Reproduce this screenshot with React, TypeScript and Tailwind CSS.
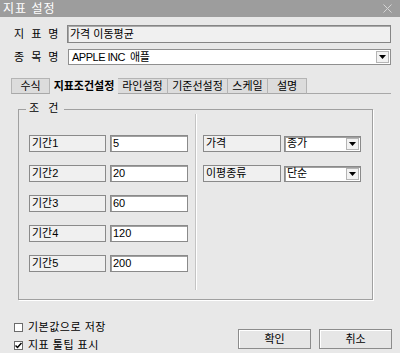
import { useState } from "react";

const tabs = ["수식", "지표조건설정", "라인설정", "기준선설정", "스케일", "설명"];
const tabWidths = ["w-[39px]", "w-[68px]", "w-[50px]", "w-[60px]", "w-[40px]", "w-[39px]"];

const periods = [
    { label: "기간1", value: "5" },
    { label: "기간2", value: "20" },
    { label: "기간3", value: "60" },
    { label: "기간4", value: "120" },
    { label: "기간5", value: "200" },
];

function DropButton() {
    return (
        <div className="flex items-center justify-center bg-[#f2f2f2] border border-[#b5b5b5] w-[13px] h-[12px]">
            <svg width="7" height="4" viewBox="0 0 7 4">
                <path d="M0 0 L7 0 L3.5 4 Z" fill="#000" />
            </svg>
        </div>
    );
}

function Check({ checked }: { checked?: boolean }) {
    return (
        <div className="w-[9px] h-[9px] bg-white border border-[#6b6b6b] flex items-center justify-center">
            {checked && (
                <svg width="7" height="7" viewBox="0 0 7 7">
                    <path d="M0.5 3.5 L2.5 5.5 L6.5 1" stroke="#000" strokeWidth="1.5" fill="none" />
                </svg>
            )}
        </div>
    );
}

export default function App() {
    const [active] = useState(1);

    return (
        <div className="w-[400px] h-[353px] bg-[#e8e8e8] flex flex-col text-[11px] leading-none text-black font-['Liberation_Sans','Noto_Sans_CJK_KR',sans-serif] overflow-hidden whitespace-nowrap">
            {/* Title bar */}
            <div className="h-[17px] bg-[#9d9d9d] flex items-center justify-between pl-[3px] pr-[8px] text-white text-[12px]">
                <span className="tracking-[1px]">지표 설정</span>
                <svg width="9" height="9" viewBox="0 0 9 9">
                    <path d="M0.5 0.5 L8.5 8.5 M8.5 0.5 L0.5 8.5" stroke="#d4d4d4" strokeWidth="1" />
                </svg>
            </div>

            {/* Name row */}
            <div className="mt-[8px] ml-[14px] flex items-center h-[18px]">
                <span className="w-[53px] tracking-[2px]">지 표 명</span>
                <div className="w-[324px] h-[18px] bg-[#f0f0f0] border border-[#858585] shadow-[inset_1px_1px_0_#a8a8a8] flex items-center pl-[2px]">
                    가격 이동평균
                </div>
            </div>

            {/* Symbol row */}
            <div className="mt-[6px] ml-[14px] flex items-center h-[16px]">
                <span className="w-[54px] tracking-[2px]">종 목 명</span>
                <div className="w-[323px] h-[16px] bg-white border border-[#8f8f8f] flex items-center justify-between pl-[3px] pr-[1px]">
                    <span className="tracking-[-0.5px]">APPLE INC &nbsp;애플</span>
                    <DropButton />
                </div>
            </div>

            {/* Tabs */}
            <div className="mt-[13px] ml-[11px] flex h-[16px]">
                {tabs.map((t, i) => (
                    <div
                        key={t}
                        className={`${tabWidths[i]} h-[16px] flex items-center justify-center ${
                            i === active
                                ? "font-bold bg-[#e8e8e8]"
                                : "bg-[#dcdcdc] border-t border-r border-[#b4b4b4] border-b border-b-[#a8a8a8]"
                        } ${i === 0 ? "border-l" : ""}`}
                    >
                        {t}
                    </div>
                ))}
                <div className="w-[84px] border-b border-[#a8a8a8]" />
            </div>

            {/* Group box */}
            <div className="mt-[15px] ml-[18px] w-[355px] h-[191px] border border-[#a0a0a0] shadow-[1px_1px_0_#ffffff] relative flex">
                <span className="absolute -top-[7px] left-[7px] px-[3px] bg-[#e8e8e8] tracking-[3px]">조 건</span>

                {/* Left column */}
                <div className="pt-[25px] pl-[10px] flex flex-col gap-[13px]">
                    {periods.map((p) => (
                        <div key={p.label} className="flex gap-[4px] h-[17px]">
                            <div className="w-[77px] h-[17px] bg-[#f0f0f0] border border-[#8a8a8a] pl-[2px] pt-[2px]">
                                {p.label}
                            </div>
                            <div className="w-[78px] h-[17px] bg-white border border-[#8a8a8a] shadow-[inset_1px_1px_0_#a0a0a0] pl-[2px] pt-[2px]">
                                {p.value}
                            </div>
                        </div>
                    ))}
                </div>

                {/* Divider */}
                <div className="ml-[7px] mt-[4px] mb-[9px] w-[2px] border-l border-[#c4c4c4] border-r border-r-white" />

                {/* Right column */}
                <div className="pt-[25px] pl-[6px] flex flex-col gap-[13px]">
                    {[
                        { label: "가격", value: "종가" },
                        { label: "이평종류", value: "단순" },
                    ].map((r) => (
                        <div key={r.label} className="flex gap-[3px] h-[17px] items-center">
                            <div className="w-[78px] h-[17px] bg-[#f0f0f0] border border-[#8a8a8a] pl-[2px] pt-[2px]">
                                {r.label}
                            </div>
                            <div className="w-[77px] h-[16px] bg-white border border-[#8a8a8a] shadow-[inset_1px_1px_0_#a0a0a0] flex items-center justify-between pl-[2px] pr-[1px]">
                                <span>{r.value}</span>
                                <DropButton />
                            </div>
                        </div>
                    ))}
                </div>
            </div>

            {/* Bottom */}
            <div className="mt-[23px] flex">
                <div className="ml-[14px] flex flex-col gap-[9px]">
                    <div className="flex items-center gap-[5px] h-[9px]">
                        <Check />
                        <span className="tracking-[0.5px]">기본값으로 저장</span>
                    </div>
                    <div className="flex items-center gap-[5px] h-[9px]">
                        <Check checked />
                        <span className="tracking-[0.5px]">지표 툴팁 표시</span>
                    </div>
                </div>
                <div className="ml-auto mr-[8px] mt-[6px] flex gap-[8px]">
                    <button className="w-[73px] h-[20px] bg-[#e6e6e6] border border-[#8c8c8c] shadow-[inset_1px_1px_0_#ffffff]">
                        확인
                    </button>
                    <button className="w-[73px] h-[20px] bg-[#e6e6e6] border border-[#8c8c8c] shadow-[inset_1px_1px_0_#ffffff]">
                        취소
                    </button>
                </div>
            </div>
        </div>
    );
}
